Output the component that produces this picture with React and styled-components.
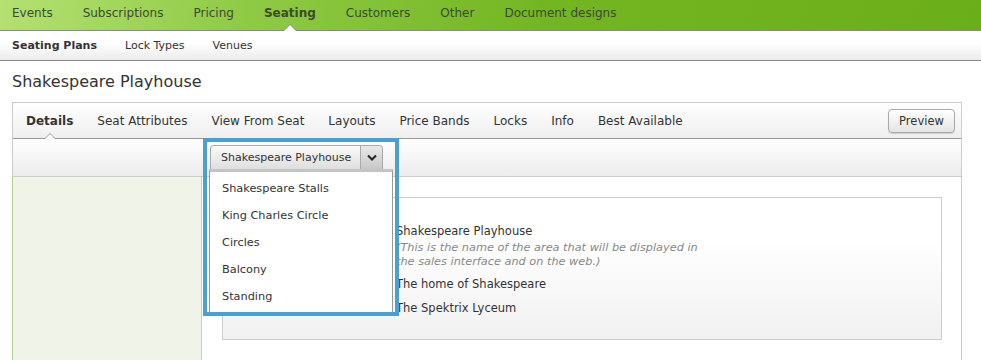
import styled, { createGlobalStyle } from "styled-components";

const GlobalStyle = createGlobalStyle`
  body {
    margin: 0;
    background: #fff;
    font-family: "DejaVu Sans", Verdana, sans-serif;
    font-size: 12px;
    color: #333;
  }
`;

const Page = styled.div`
  width: 981px;
  height: 360px;
  overflow: hidden;
`;

const MainNav = styled.nav`
  height: 30px;
  display: flex;
  align-items: center;
  padding-left: 12px;
  gap: 30px;
  background: linear-gradient(100deg, #b4e172 0%, #8fca45 25%, #74b622 55%, #6aae1a 100%);
  border-bottom: 1px solid #8a8a8a;
`;

const MainItem = styled.span`
  position: relative;
  font-size: 12px;
  color: #3d4a2c;
  font-weight: ${(p) => (p.$active ? "bold" : "normal")};
  line-height: 26px;
  padding-bottom: 4px;

  ${(p) =>
    p.$active &&
    `
    &::after {
      content: "";
      position: absolute;
      left: 50%;
      bottom: -1px;
      margin-left: -7px;
      border: 7px solid transparent;
      border-bottom-color: #8a8a8a;
      border-top: 0;
    }
    &::before {
      content: "";
      position: absolute;
      left: 50%;
      bottom: -1px;
      margin-left: -6px;
      border: 6px solid transparent;
      border-bottom-color: #fff;
      border-top: 0;
      z-index: 1;
    }
  `}
`;

const SubNav = styled.nav`
  height: 29px;
  display: flex;
  align-items: center;
  padding-left: 12px;
  gap: 28px;
  background: linear-gradient(#fff 40%, #ececec);
  border-bottom: 1px solid #8a8a8a;
`;

const SubItem = styled.span`
  font-size: 11px;
  color: #333;
  font-weight: ${(p) => (p.$active ? "bold" : "normal")};
`;

const Title = styled.h1`
  margin: 0;
  padding: 11px 12px 0;
  height: 30px;
  font-size: 16px;
  line-height: 20px;
  font-weight: normal;
  color: #333;
`;

const Panel = styled.section`
  margin: 0 19px 0 12px;
  border: 1px solid #ccc;
  border-bottom: 0;
`;

const TabBar = styled.div`
  height: 35px;
  display: flex;
  align-items: center;
  padding: 0 6px 0 13px;
  gap: 24px;
  background: linear-gradient(#fff, #efefef);
  border-bottom: 1px solid #999;
`;

const Tab = styled.span`
  position: relative;
  font-size: 12px;
  color: #333;
  font-weight: ${(p) => (p.$active ? "bold" : "normal")};
  line-height: 35px;
  padding-top: 1px;

  ${(p) =>
    p.$active &&
    `
    &::after {
      content: "";
      position: absolute;
      left: 50%;
      bottom: -1px;
      margin-left: -7px;
      border: 7px solid transparent;
      border-bottom-color: #999;
      border-top: 0;
    }
    &::before {
      content: "";
      position: absolute;
      left: 50%;
      bottom: -1px;
      margin-left: -6px;
      border: 6px solid transparent;
      border-bottom-color: #fff;
      border-top: 0;
      z-index: 1;
    }
  `}
`;

const Spacer = styled.div`
  flex: 1;
`;

const Button = styled.button`
  height: 24px;
  width: 67px;
  padding: 0;
  font-family: inherit;
  font-size: 11.5px;
  color: #333;
  border: 1px solid #aaa;
  border-radius: 4px;
  background: linear-gradient(#fff, #e4e4e4);
  box-shadow: 0 1px 1px rgba(0, 0, 0, 0.15);
`;

const Toolbar = styled.div`
  position: relative;
  height: 37px;
  background: linear-gradient(#fff, #ececec);
  border-bottom: 1px solid #ccc;
`;

const Body = styled.div`
  display: flex;
  height: 200px;
`;

const Sidebar = styled.aside`
  width: 188px;
  background: #f0f3e8;
  border-left: 1px solid #b8cf92;
  border-right: 1px solid #c8d2b8;
  margin-left: -1px;
`;

const Content = styled.div`
  flex: 1;
  padding: 20px 19px 0 20px;
`;

const FormBox = styled.div`
  height: 143px;
  border: 1px solid #ccc;
  background: linear-gradient(#fff 30%, #f1f1f1);
  padding-top: 26px;
  box-sizing: border-box;
`;

const FormRow = styled.div`
  display: grid;
  grid-template-columns: 173px 1fr;
  margin-bottom: ${(p) => p.$gap || 10}px;
  line-height: 14px;
  font-size: 11.5px;
`;

const Label = styled.span`
  text-align: right;
  padding-right: 12px;
  color: #333;
`;

const Value = styled.div`
  color: #333;
`;

const Help = styled.div`
  margin-top: 3px;
  font-style: italic;
  color: #888;
  line-height: 14px;
  font-size: 11.3px;
`;

const Highlight = styled.div`
  position: absolute;
  left: 190px;
  top: -1px;
  width: 188px;
  height: 170px;
  border: 4px solid #4a9fd4;
  background: transparent;
  z-index: 5;
`;

const Select = styled.div`
  position: absolute;
  left: 3px;
  top: 3px;
  width: 173px;
  height: 24px;
  box-sizing: border-box;
  display: flex;
  border: 1px solid #aaa;
  border-bottom: 0;
  border-radius: 4px 4px 0 0;
  background: linear-gradient(#fbfbfb, #dedede);
`;

const SelectText = styled.span`
  flex: 1;
  padding-left: 10px;
  line-height: 24px;
  font-size: 11px;
  white-space: nowrap;
  color: #333;
`;

const SelectArrow = styled.span`
  width: 21px;
  border-left: 1px solid #aaa;
  display: flex;
  align-items: center;
  justify-content: center;
  background: linear-gradient(#e8e8e8, #c8c8c8);
  border-radius: 0 4px 0 0;
`;

const List = styled.ul`
  position: absolute;
  left: 2px;
  top: 27px;
  width: 184px;
  height: 143px;
  box-sizing: border-box;
  margin: 0;
  padding: 3px 0 0;
  list-style: none;
  background: #fff;
  border: 1px solid #999;
  border-top: 3px solid #c4c4c4;
  border-bottom: 0;
`;

const ListItem = styled.li`
  height: 27px;
  line-height: 27px;
  padding-left: 12px;
  font-size: 11.3px;
  white-space: nowrap;
  color: #333;
`;

const options = [
  "Shakespeare Stalls",
  "King Charles Circle",
  "Circles",
  "Balcony",
  "Standing",
];

export default function App() {
  return (
    <Page>
      <GlobalStyle />
      <MainNav>
        <MainItem>Events</MainItem>
        <MainItem>Subscriptions</MainItem>
        <MainItem>Pricing</MainItem>
        <MainItem $active>Seating</MainItem>
        <MainItem>Customers</MainItem>
        <MainItem>Other</MainItem>
        <MainItem>Document designs</MainItem>
      </MainNav>
      <SubNav>
        <SubItem $active>Seating Plans</SubItem>
        <SubItem>Lock Types</SubItem>
        <SubItem>Venues</SubItem>
      </SubNav>
      <Title>Shakespeare Playhouse</Title>
      <Panel>
        <TabBar>
          <Tab $active>Details</Tab>
          <Tab>Seat Attributes</Tab>
          <Tab>View From Seat</Tab>
          <Tab>Layouts</Tab>
          <Tab>Price Bands</Tab>
          <Tab>Locks</Tab>
          <Tab>Info</Tab>
          <Tab>Best Available</Tab>
          <Spacer />
          <Button>Preview</Button>
        </TabBar>
        <Toolbar>
          <Highlight>
            <Select>
              <SelectText>Shakespeare Playhouse</SelectText>
              <SelectArrow>
                <svg width="10" height="7" viewBox="0 0 10 7">
                  <path d="M1 1.5 L5 5.5 L9 1.5" fill="none" stroke="#222" strokeWidth="2" />
                </svg>
              </SelectArrow>
            </Select>
            <List>
              {options.map((o) => (
                <ListItem key={o}>{o}</ListItem>
              ))}
            </List>
          </Highlight>
        </Toolbar>
        <Body>
          <Sidebar />
          <Content>
            <FormBox>
              <FormRow $gap={8}>
                <Label>Name:</Label>
                <div>
                  <Value>Shakespeare Playhouse</Value>
                  <Help>
                    (This is the name of the area that will be displayed in
                    <br />
                    the sales interface and on the web.)
                  </Help>
                </div>
              </FormRow>
              <FormRow $gap={10}>
                <Label>Description:</Label>
                <Value>The home of Shakespeare</Value>
              </FormRow>
              <FormRow>
                <Label>Venue:</Label>
                <Value>The Spektrix Lyceum</Value>
              </FormRow>
            </FormBox>
          </Content>
        </Body>
      </Panel>
    </Page>
  );
}
